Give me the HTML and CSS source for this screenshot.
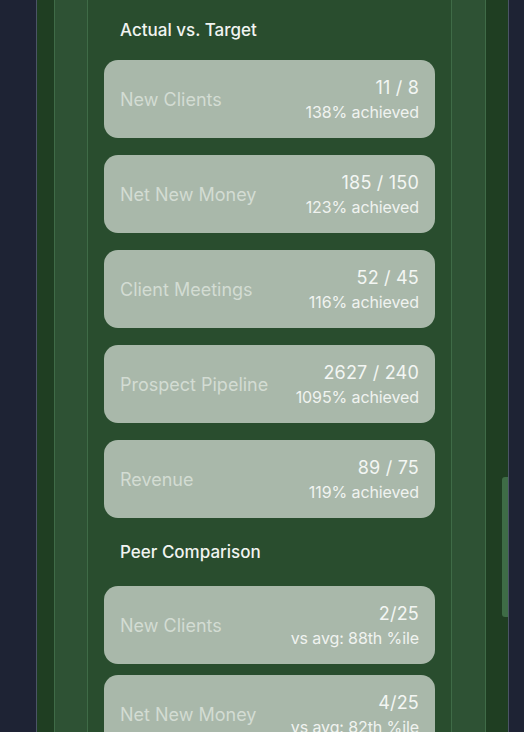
FILE: index.html
```html
<!DOCTYPE html>
<html lang="en">
<head>
<meta charset="utf-8">
<title>Performance</title>
<link rel="stylesheet" href="styles.css">
</head>
<body>
<div class="app">
  <div class="frame">
    <div class="panel">
      <div class="inner">
        <section class="section">
          <h2 class="section-title">Actual vs. Target</h2>
          <div class="cards">
            <div class="card"><span class="label">New Clients</span><div class="figures"><div class="value">11 / 8</div><div class="sub">138% achieved</div></div></div>
            <div class="card"><span class="label">Net New Money</span><div class="figures"><div class="value">185 / 150</div><div class="sub">123% achieved</div></div></div>
            <div class="card"><span class="label">Client Meetings</span><div class="figures"><div class="value">52 / 45</div><div class="sub">116% achieved</div></div></div>
            <div class="card"><span class="label">Prospect Pipeline</span><div class="figures"><div class="value">2627 / 240</div><div class="sub">1095% achieved</div></div></div>
            <div class="card"><span class="label">Revenue</span><div class="figures"><div class="value">89 / 75</div><div class="sub">119% achieved</div></div></div>
          </div>
        </section>
        <section class="section section--peer">
          <h2 class="section-title">Peer Comparison</h2>
          <div class="cards">
            <div class="card"><span class="label">New Clients</span><div class="figures"><div class="value">2/25</div><div class="sub">vs avg: 88th %ile</div></div></div>
            <div class="card"><span class="label">Net New Money</span><div class="figures"><div class="value">4/25</div><div class="sub">vs avg: 82th %ile</div></div></div>
            <div class="card"><span class="label">Client Meetings</span><div class="figures"><div class="value">3/25</div><div class="sub">vs avg: 85th %ile</div></div></div>
          </div>
        </section>
      </div>
    </div>
    <div class="thumb"></div>
  </div>
</div>
</body>
</html>
```

FILE: styles.css
```css
html, body {
  margin: 0;
  padding: 0;
}
body {
  background: #1e2334;
  font-family: Inter, "Noto Sans", "Liberation Sans", sans-serif;
  height: 732px;
  overflow: hidden;
}
.app {
  padding: 0 15px 0 36px;
}
.frame {
  position: relative;
  background: #1f3e22;
  border-left: 1px solid #4b5466;
  border-right: 1px solid #4b5466;
  padding: 0 22px 0 17px;
  min-height: 732px;
}
.panel {
  background: #2e5234;
  border-left: 1px solid #3f6b47;
  border-right: 1px solid #3f6b47;
  padding: 0 33px 0 32px;
}
.inner {
  background: #294d2e;
  border-left: 1px solid #3f6b47;
  border-right: 1px solid #3f6b47;
  padding: 16px 16px 40px;
}
.section + .section {
  margin-top: 20px;
}
.section-title {
  margin: 0 0 16px;
  padding: 0 16px;
  font-size: 17px;
  line-height: 28px;
  font-weight: 500;
  color: #f1f4f1;
}
.section--peer .section-title {
  margin-bottom: 20px;
}
.cards {
  display: flex;
  flex-direction: column;
  gap: 17px;
}
.section--peer .cards {
  gap: 11px;
}
.card {
  height: 78px;
  box-sizing: border-box;
  background: #a9b8aa;
  border-radius: 14px;
  padding: 0 16px;
  display: flex;
  align-items: center;
  justify-content: space-between;
}
.label {
  font-size: 18px;
  color: #d3dcd3;
}
.figures {
  text-align: right;
  padding-top: 2px;
}
.value {
  font-size: 18px;
  line-height: 24px;
  letter-spacing: 0.2px;
  color: #f3f6f3;
}
.sub {
  font-size: 16px;
  line-height: 24px;
  letter-spacing: -0.1px;
  color: #f0f3f0;
}
.thumb {
  position: absolute;
  right: 0;
  top: 477px;
  width: 6px;
  height: 140px;
  background: #3e6c46;
  border-radius: 3px 0 0 3px;
}
```
